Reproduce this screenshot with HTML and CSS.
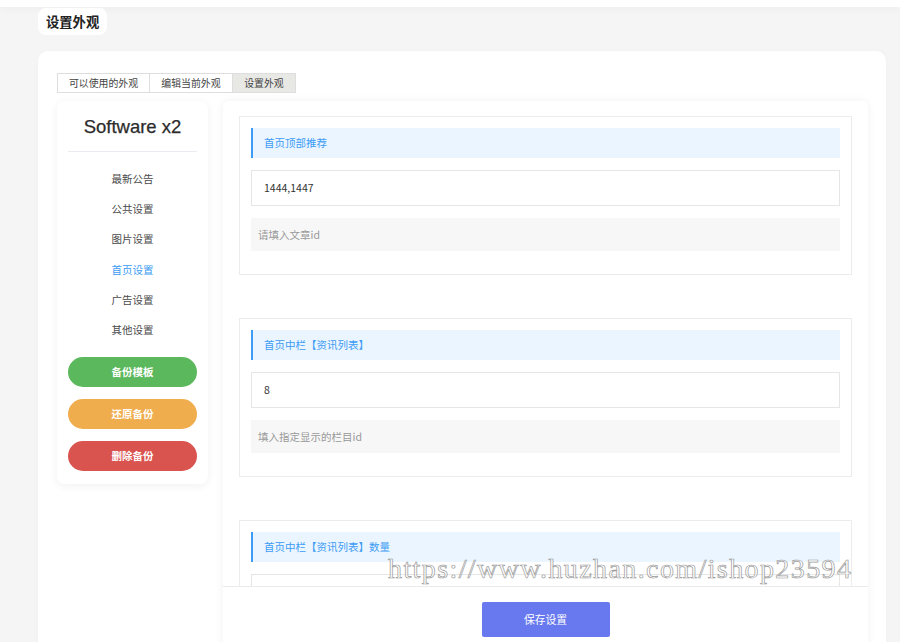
FILE: index.html
```html
<!DOCTYPE html>
<html lang="zh-CN">
<head>
<meta charset="utf-8">
<title>设置外观</title>
<link rel="stylesheet" href="styles.css">
</head>
<body>
<div class="topbar"></div>
<div class="page">
  <div class="title-pill">设置外观</div>
  <div class="card">
    <div class="tabs">
      <div class="tab tab-1">可以使用的外观</div>
      <div class="tab tab-2">编辑当前外观</div>
      <div class="tab tab-3 active">设置外观</div>
    </div>
    <div class="body">
      <aside class="sidebar">
        <div class="brand">Software x2</div>
        <ul class="menu">
          <li>最新公告</li>
          <li>公共设置</li>
          <li>图片设置</li>
          <li class="on">首页设置</li>
          <li>广告设置</li>
          <li>其他设置</li>
        </ul>
        <div class="btns">
          <div class="pill green">备份模板</div>
          <div class="pill orange">还原备份</div>
          <div class="pill red">删除备份</div>
        </div>
      </aside>
      <main class="panel">
        <div class="scroll">
          <section class="group">
            <div class="ghead">首页顶部推荐</div>
            <div class="ginput">1444,1447</div>
            <div class="ghelp">请填入文章id</div>
          </section>
          <section class="group">
            <div class="ghead">首页中栏【资讯列表】</div>
            <div class="ginput">8</div>
            <div class="ghelp">填入指定显示的栏目id</div>
          </section>
          <section class="group">
            <div class="ghead">首页中栏【资讯列表】数量</div>
            <div class="ginput"></div>
          </section>
        </div>
        <div class="footer">
          <div class="save">保存设置</div>
        </div>
      </main>
    </div>
  </div>
</div>
<div class="watermark">https://www.huzhan.com/ishop23594</div>
</body>
</html>
```

FILE: styles.css
```css
* { box-sizing: border-box; margin: 0; padding: 0; }
html, body { height: 100%; }
body {
  background: #f5f5f6;
  font-family: "Noto Sans CJK SC", "Liberation Sans", sans-serif;
  color: #333;
  overflow: hidden;
  position: relative;
}
.topbar {
  height: 7px;
  background: #fff;
  box-shadow: 0 2px 8px rgba(0,0,0,0.04);
}
.page {
  padding: 1px 14px 0 38px;
}
.title-pill {
  display: inline-block;
  height: 27px;
  line-height: 27px;
  padding: 0 8px;
  background: #fff;
  border-radius: 8px;
  font-size: 13.3px;
  font-weight: 700;
  color: #222;
}
.card {
  margin-top: 16px;
  width: 848px;
  height: 620px;
  background: #fff;
  border-radius: 10px;
  padding: 22px 18px 0 19px;
  box-shadow: 0 0 8px rgba(0,0,0,0.02);
}
.tabs {
  display: flex;
  height: 20px;
}
.tab {
  height: 20px;
  line-height: 18px;
  border: 1px solid #dedede;
  font-size: 9.9px;
  color: #444;
  text-align: center;
}
.tab + .tab { border-left: none; }
.tab-1 { width: 93px; }
.tab-2 { width: 83px; }
.tab-3 { width: 63px; }
.tab.active { background: #e8e8e5; }
.body {
  margin-top: 8px;
  display: flex;
  gap: 15px;
  align-items: flex-start;
}
.sidebar {
  width: 151px;
  height: 383px;
  background: #fff;
  border-radius: 8px;
  box-shadow: 0 2px 10px rgba(0,0,0,0.06);
  padding: 0 11px 13px;
}
.brand {
  height: 51px;
  line-height: 52px;
  text-align: center;
  font-family: "Liberation Sans", Arial, sans-serif;
  font-size: 18.5px;
  color: #2b2b2b;
  -webkit-text-stroke: 0.25px #2b2b2b;
  border-bottom: 1px solid #ebebf2;
}
.menu {
  list-style: none;
  padding-top: 12px;
}
.menu li {
  height: 30.2px;
  line-height: 30px;
  text-align: center;
  font-size: 10.5px;
  color: #4a4a4a;
}
.menu li.on { color: #3d9cf6; }
.btns {
  margin-top: 12px;
  display: flex;
  flex-direction: column;
  gap: 12px;
}
.pill {
  height: 30px;
  line-height: 30px;
  border-radius: 15px;
  text-align: center;
  color: #fff;
  font-size: 10.5px;
  font-weight: 700;
}
.green { background: #5cb85c; }
.orange { background: #f0ad4e; }
.red { background: #d9534f; }
.panel {
  width: 645px;
  height: 560px;
  background: #fff;
  border-radius: 6px 6px 0 0;
  box-shadow: 0 0 10px rgba(0,0,0,0.06);
  display: flex;
  flex-direction: column;
}
.scroll {
  height: 485px;
  overflow: hidden;
  padding: 15px 16px 0;
}
.group {
  border: 1px solid #ececec;
  padding: 11px 11px 23px;
  margin-bottom: 43px;
}
.ghead {
  height: 30px;
  line-height: 30px;
  background: #eaf5ff;
  border-left: 2px solid #3d9cf6;
  padding-left: 11px;
  color: #3d9cf6;
  font-size: 10.5px;
}
.ginput {
  margin-top: 12px;
  height: 36px;
  line-height: 34px;
  border: 1px solid #e6e6e6;
  padding-left: 12px;
  font-size: 10.5px;
  color: #333;
}
.ghelp {
  margin-top: 12px;
  height: 33px;
  line-height: 33px;
  background: #f7f7f7;
  padding-left: 7px;
  font-size: 10.5px;
  color: #999;
}
.footer {
  height: 75px;
  border-top: 1px solid #ebebeb;
  padding-top: 15px;
  display: flex;
  justify-content: center;
  align-items: flex-start;
  background: #fff;
}
.save {
  width: 128px;
  height: 35px;
  line-height: 35px;
  text-align: center;
  background: #6878ee;
  border-radius: 2px;
  color: #fff;
  font-size: 10.8px;
}
.watermark {
  position: absolute;
  left: 388px;
  top: 551px;
  font-family: "Liberation Serif", "Times New Roman", serif;
  font-size: 28px;
  letter-spacing: 1.4px;
  line-height: 36px;
  color: rgba(255,255,255,0.85);
  -webkit-text-stroke: 0.7px #9a9a9a;
  white-space: nowrap;
  pointer-events: none;
}
```
